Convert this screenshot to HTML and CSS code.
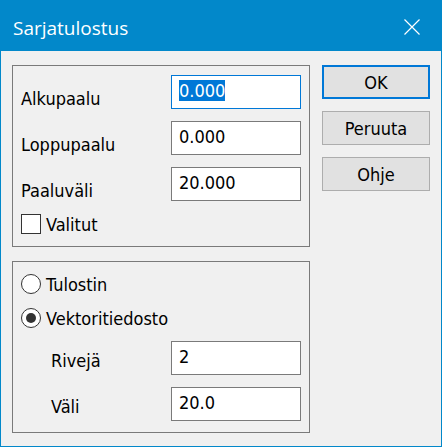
FILE: index.html
```html
<!DOCTYPE html>
<html lang="fi">
<head>
    <meta charset="UTF-8">
    <title>Sarjatulostus</title>
    <link rel="stylesheet" href="styles.css">
</head>
<body>
    <div class="dialog">
        <div class="titlebar">
            <span class="title">Sarjatulostus</span>
            <svg class="close" width="16" height="16" viewBox="0 0 16 16">
                <path d="M0.5 0.5 L15.5 15.5 M15.5 0.5 L0.5 15.5" stroke="#fff" stroke-width="1.2" fill="none"/>
            </svg>
        </div>

        <div class="content">
            <div class="groups">
                <div class="group range">
                    <label class="lbl">Alkupaalu</label>
                    <div class="field focused"><span class="sel">0.000</span></div>
                    <label class="lbl">Loppupaalu</label>
                    <div class="field">0.000</div>
                    <label class="lbl">Paaluväli</label>
                    <div class="field">20.000</div>
                    <div class="check-row">
                        <span class="checkbox"></span>
                        <span>Valitut</span>
                    </div>
                </div>

                <div class="group output">
                    <div class="radio-row">
                        <span class="radio"></span>
                        <span>Tulostin</span>
                    </div>
                    <div class="radio-row">
                        <span class="radio checked"></span>
                        <span>Vektoritiedosto</span>
                    </div>
                    <div class="sub-fields">
                        <label class="lbl indent">Rivejä</label>
                        <div class="field">2</div>
                        <label class="lbl indent">Väli</label>
                        <div class="field">20.0</div>
                    </div>
                </div>
            </div>

            <div class="buttons">
                <button class="btn default">OK</button>
                <button class="btn">Peruuta</button>
                <button class="btn">Ohje</button>
            </div>
        </div>
    </div>
</body>
</html>
```

FILE: styles.css
```css
* { margin: 0; padding: 0; box-sizing: border-box; }
body { background: #ffffff; font-family: "DejaVu Sans Condensed", "DejaVu Sans", sans-serif; font-size: 18px; color: #000; }

.dialog { width: 442px; height: 447px; border: 1px solid #0288ca; border-top: none; background: #f0f0f0; display: flex; flex-direction: column; }
.titlebar { height: 51px; margin: 0 -1px; background: #0288ca; color: #fff; display: flex; align-items: center; justify-content: space-between; padding: 4px 22px 0 13px; }
.title { font-family: "Open Sans", sans-serif; font-size: 19px; }
.close { display: block; margin-top: -2px; }

.content { display: flex; padding: 14px 11px 0 11px; gap: 12px; }
.groups { width: 298px; display: flex; flex-direction: column; gap: 14px; }
.group { border: 1px solid #7a7a7a; }

.range { height: 182px; display: grid; grid-template-columns: 150px 130px; grid-auto-rows: 34px; row-gap: 12px; padding: 9px 0 0 8px; }
.output { height: 172px; padding: 12px 0 0 8px; display: flex; flex-direction: column; gap: 14px; }
.sub-fields { display: grid; grid-template-columns: 150px 130px; grid-auto-rows: 34px; row-gap: 12px; margin-top: -1px; }

.lbl { align-self: end; line-height: 20px; }
.sub-fields .lbl { padding-bottom: 4px; }
.indent { padding-left: 30px; }

.field { background: #fff; border: 1px solid #7a7a7a; padding: 3px 7px; line-height: 24px; }
.field.focused { border-color: #0078d7; }
.sel { background: #0078d7; color: #fff; }

.check-row, .radio-row { display: flex; align-items: center; gap: 5px; height: 20px; grid-column: 1 / 3; }
.check-row { margin-top: 1px; }
.checkbox { width: 20px; height: 20px; border: 1px solid #333; background: #fff; }
.radio { width: 20px; height: 20px; border: 1px solid #333; border-radius: 50%; background: #fff; position: relative; }
.radio.checked::after { content: ""; position: absolute; left: 4px; top: 4px; width: 10px; height: 10px; border-radius: 50%; background: #333; }

.buttons { display: flex; flex-direction: column; gap: 12px; width: 108px; }
.btn { height: 34px; background: #e1e1e1; border: 1px solid #adadad; font-family: inherit; font-size: 18px; color: #000; }
.btn.default { border: 2px solid #0078d7; }
```
